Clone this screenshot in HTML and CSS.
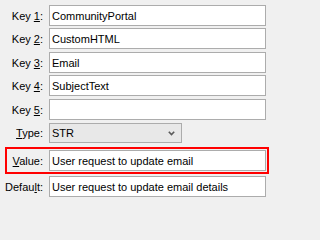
FILE: index.html
```html
<!DOCTYPE html>
<html>
<head>
<meta charset="utf-8">
<link rel="stylesheet" href="styles.css">
</head>
<body>
<div class="form">
  <div class="row">
    <label class="lbl">Key <u>1</u>:</label>
    <input class="field" type="text" value="CommunityPortal">
  </div>
  <div class="row">
    <label class="lbl">Key <u>2</u>:</label>
    <input class="field" type="text" value="CustomHTML">
  </div>
  <div class="row extra">
    <label class="lbl">Key <u>3</u>:</label>
    <input class="field" type="text" value="Email">
  </div>
  <div class="row">
    <label class="lbl">Key <u>4</u>:</label>
    <input class="field" type="text" value="SubjectText">
  </div>
  <div class="row extra">
    <label class="lbl">Key <u>5</u>:</label>
    <input class="field" type="text" value="">
  </div>
  <div class="row extra">
    <label class="lbl"><u>T</u>ype:</label>
    <div class="combo">
      <span class="combo-text">STR</span>
      <svg class="chev" width="7" height="5" viewBox="0 0 7 5"><polyline points="0.8,0.8 3.5,3.6 6.2,0.8" fill="none" stroke="#5a5a5a" stroke-width="1.6"/></svg>
    </div>
  </div>
  <div class="row highlight">
    <label class="lbl"><u>V</u>alue:</label>
    <input class="field" type="text" value="User request to update email">
  </div>
  <div class="row">
    <label class="lbl">Defau<u>l</u>t:</label>
    <input class="field" type="text" value="User request to update email details">
  </div>
</div>
</body>
</html>
```
FILE: styles.css
```css
html, body {
  margin: 0;
  padding: 0;
  background: #f0f0f0;
}
body {
  font-family: "Liberation Sans", Arial, sans-serif;
  font-size: 11px;
  color: #000;
}
.form {
  display: flex;
  flex-direction: column;
  gap: 2px;
  padding: 5px 0 0 5px;
  width: 261px;
}
.row {
  display: flex;
  align-items: center;
}
.row.extra {
  margin-top: 1px;
}
.lbl {
  width: 38px;
  margin-right: 6px;
  text-align: right;
  white-space: nowrap;
  color: #000;
}
.lbl u {
  text-underline-offset: 1px;
}
.field {
  box-sizing: border-box;
  width: 217px;
  height: 21px;
  margin: 0;
  padding: 0 2px;
  border: 1px solid #acacac;
  background: #fff;
  font-family: "Liberation Sans", Arial, sans-serif;
  font-size: 11px;
  color: #000;
  line-height: 19px;
  outline: none;
}
.combo {
  box-sizing: border-box;
  width: 133px;
  height: 20px;
  border: 1px solid #acacac;
  background: #e8e8e8;
  display: flex;
  align-items: center;
  justify-content: space-between;
  padding: 0 6px 0 2px;
}
.combo-text {
  line-height: 18px;
}
.chev {
  display: block;
}
.highlight {
  margin-top: 2px;
  margin-right: -3px;
  border: 2px solid #ff0000;
  padding: 1px 1px 1px 0;
}
.highlight .lbl {
  width: 36px;
}
```
